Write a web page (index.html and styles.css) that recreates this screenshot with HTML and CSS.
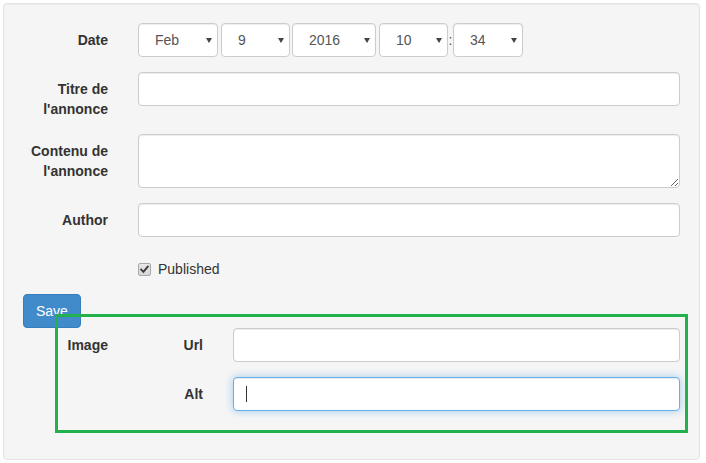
FILE: index.html
```html
<!DOCTYPE html>
<html lang="fr">
<head>
<meta charset="utf-8">
<title>Annonce</title>
<link rel="stylesheet" href="styles.css">
</head>
<body>
<div class="well">
  <form class="form">
    <div class="group">
      <label class="lbl">Date</label>
      <div class="ctl date">
        <span class="sel sel-month"><select><option>Feb</option></select></span>
        <span class="sel sel-day"><select><option>9</option></select></span>
        <span class="sel sel-year"><select><option>2016</option></select></span>
        <span class="sel sel-hour"><select><option>10</option></select></span>
        <span class="colon">:</span>
        <span class="sel sel-min"><select><option>34</option></select></span>
      </div>
    </div>
    <div class="group">
      <label class="lbl">Titre de l'annonce</label>
      <div class="ctl"><input class="field" type="text"></div>
    </div>
    <div class="group">
      <label class="lbl">Contenu de l'annonce</label>
      <div class="ctl"><textarea class="field area"></textarea></div>
    </div>
    <div class="group">
      <label class="lbl">Author</label>
      <div class="ctl"><input class="field" type="text"></div>
    </div>
    <div class="group">
      <span></span>
      <div class="ctl">
        <label class="check">
          <span class="cbox"><svg width="11" height="11" viewBox="0 0 11 11"><path d="M2.2 5.6 L4.4 7.9 L8.8 2.6" fill="none" stroke="#3a3a3a" stroke-width="1.9" stroke-linecap="square"/></svg></span>
          Published
        </label>
      </div>
    </div>
    <button class="btn" type="button">Save</button>
    <div class="image-group">
      <div class="group">
        <label class="lbl">Image</label>
        <div class="ctl">
          <div class="subgroup">
            <label class="lbl">Url</label>
            <div class="ctl"><input class="field" type="text"></div>
          </div>
          <div class="subgroup">
            <label class="lbl">Alt</label>
            <div class="ctl caret-wrap"><input class="field focused" type="text"><span class="caret"></span></div>
          </div>
        </div>
      </div>
      <div class="highlight"></div>
    </div>
  </form>
</div>
</body>
</html>
```
FILE: styles.css
```css
html, body {
  margin: 0;
  padding: 0;
  background: #fff;
}
body {
  font-family: "Liberation Sans", Arial, Helvetica, sans-serif;
  font-size: 14px;
  line-height: 20px;
  color: #333;
}
.well {
  margin: 3px 0 0 3px;
  width: 697px;
  box-sizing: border-box;
  background: #f5f5f5;
  border: 1px solid #e3e3e3;
  border-radius: 4px;
  box-shadow: inset 0 1px 1px rgba(0, 0, 0, 0.05);
  padding: 19px 19px 18px;
}
.form {
  margin: 0;
}
.group {
  display: grid;
  grid-template-columns: 85px 1fr;
  column-gap: 30px;
  margin-bottom: 15px;
}
.subgroup {
  display: grid;
  grid-template-columns: 65px 1fr;
  column-gap: 30px;
  margin-bottom: 15px;
}
.lbl {
  text-align: right;
  font-weight: bold;
  padding-top: 7px;
  color: #333;
}
.ctl {
  min-width: 0;
}
.field {
  display: block;
  width: 100%;
  height: 34px;
  box-sizing: border-box;
  margin: 0;
  padding: 6px 12px;
  font: inherit;
  color: #555;
  background: #fff;
  border: 1px solid #ccc;
  border-radius: 4px;
  box-shadow: inset 0 1px 1px rgba(0, 0, 0, 0.075);
  outline: none;
}
.area {
  height: 54px;
  resize: vertical;
}
.focused {
  border-color: #66afe9;
  box-shadow: inset 0 1px 1px rgba(0, 0, 0, 0.075), 0 0 8px rgba(102, 175, 233, 0.6);
}
.caret-wrap {
  position: relative;
}
.caret {
  position: absolute;
  left: 13px;
  top: 9px;
  width: 1px;
  height: 16px;
  background: #333;
}
.date {
  display: flex;
  align-items: center;
}
.sel {
  position: relative;
  display: block;
  margin-right: 3px;
}
.sel select {
  display: block;
  width: 100%;
  height: 34px;
  box-sizing: border-box;
  margin: 0;
  padding: 6px 20px 6px 16px;
  font: inherit;
  color: #555;
  background: #fff;
  border: 1px solid #ccc;
  border-radius: 4px;
  box-shadow: inset 0 1px 1px rgba(0, 0, 0, 0.075);
  -webkit-appearance: none;
  appearance: none;
  outline: none;
}
.sel::after {
  content: "";
  position: absolute;
  right: 6px;
  top: 15px;
  width: 0;
  height: 0;
  border-left: 3px solid transparent;
  border-right: 3px solid transparent;
  border-top: 5px solid #444;
  pointer-events: none;
}
.sel-month { width: 80px; }
.sel-day { width: 69px; margin-right: 2px; }
.sel-year { width: 84px; }
.sel-hour { width: 69px; margin-right: 0; }
.sel-min { width: 70px; margin-right: 0; }
.colon {
  width: 5px;
  text-align: center;
  color: #555;
}
.check {
  display: flex;
  align-items: flex-start;
  padding-top: 7px;
  min-height: 20px;
  color: #333;
  font-weight: normal;
}
.cbox {
  display: flex;
  align-items: center;
  justify-content: center;
  width: 13px;
  height: 13px;
  box-sizing: border-box;
  margin-top: 4px;
  margin-right: 7px;
  background: linear-gradient(#e8e8e8, #d6d6d6);
  border: 1px solid #a9a9a9;
  border-radius: 2px;
}
.cbox svg {
  display: block;
}
.btn {
  display: block;
  margin: 0;
  padding: 6px 12px;
  font: inherit;
  line-height: 20px;
  color: #fff;
  background: #428bca;
  border: 1px solid #357ebd;
  border-radius: 4px;
  cursor: pointer;
}
.image-group {
  position: relative;
}
.highlight {
  position: absolute;
  left: 32px;
  top: -14px;
  width: 633px;
  height: 119px;
  box-sizing: border-box;
  border: 3px solid #22b14c;
  pointer-events: none;
}
```
